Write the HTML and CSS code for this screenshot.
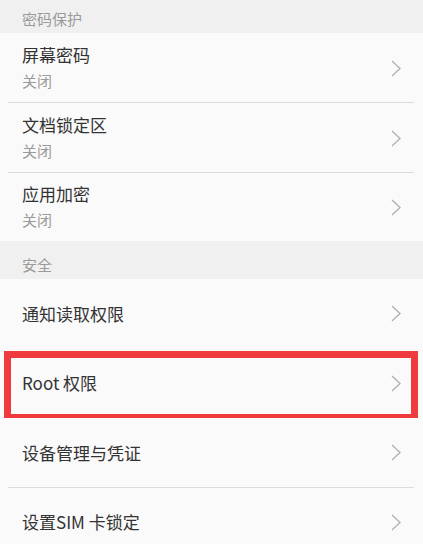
FILE: index.html
```html
<!DOCTYPE html>
<html lang="zh-CN">
<head>
<meta charset="utf-8">
<link rel="stylesheet" href="styles.css">
</head>
<body>
<div class="page">
  <div class="section-header first">密码保护</div>
  <div class="row two-line divided">
    <div class="texts"><div class="title">屏幕密码</div><div class="sub">关闭</div></div>
    <svg class="chev" width="10" height="17" viewBox="0 0 10 17"><polyline points="1,1 9,8.5 1,16" /></svg>
  </div>
  <div class="row two-line divided">
    <div class="texts"><div class="title">文档锁定区</div><div class="sub">关闭</div></div>
    <svg class="chev" width="10" height="17" viewBox="0 0 10 17"><polyline points="1,1 9,8.5 1,16" /></svg>
  </div>
  <div class="row two-line last">
    <div class="texts"><div class="title">应用加密</div><div class="sub">关闭</div></div>
    <svg class="chev" width="10" height="17" viewBox="0 0 10 17"><polyline points="1,1 9,8.5 1,16" /></svg>
  </div>
  <div class="section-header">安全</div>
  <div class="row one-line">
    <div class="title">通知读取权限</div>
    <svg class="chev" width="10" height="17" viewBox="0 0 10 17"><polyline points="1,1 9,8.5 1,16" /></svg>
  </div>
  <div class="row one-line highlighted">
    <div class="title">Root 权限</div>
    <svg class="chev" width="10" height="17" viewBox="0 0 10 17"><polyline points="1,1 9,8.5 1,16" /></svg>
    <div class="mark"></div>
  </div>
  <div class="row one-line divided">
    <div class="title">设备管理与凭证</div>
    <svg class="chev" width="10" height="17" viewBox="0 0 10 17"><polyline points="1,1 9,8.5 1,16" /></svg>
  </div>
  <div class="row one-line">
    <div class="title">设置SIM 卡锁定</div>
    <svg class="chev" width="10" height="17" viewBox="0 0 10 17"><polyline points="1,1 9,8.5 1,16" /></svg>
  </div>
</div>
</body>
</html>
```

FILE: styles.css
```css
html, body {
  margin: 0;
  padding: 0;
  background: #fafafa;
  overflow: hidden;
}
.page {
  width: 423px;
  height: 544px;
  overflow: hidden;
  font-family: "Noto Sans CJK SC", "Noto Sans", Roboto, sans-serif;
}
.section-header {
  height: 38px;
  box-sizing: border-box;
  background: #f0f0f0;
  color: #9a9a9a;
  font-size: 15px;
  line-height: 20px;
  padding: 14px 22px 4px;
}
.section-header.first {
  height: 33px;
  padding-top: 9px;
}
.row {
  position: relative;
  display: flex;
  align-items: center;
  justify-content: space-between;
  box-sizing: border-box;
  padding: 0 22px;
  background: #fafafa;
}
.row.two-line { height: 70px; }
.row.two-line.last { height: 68px; }
.row.one-line { height: 69.5px; }
.row.divided::after {
  content: "";
  position: absolute;
  left: 8px;
  right: 9px;
  bottom: 0;
  height: 1px;
  background: #dcdcdc;
}
.texts {
  display: flex;
  flex-direction: column;
  padding-bottom: 1px;
}
.title {
  color: #333333;
  font-size: 17px;
  line-height: 24px;
}
.two-line .title { margin-top: -1px; }
.sub {
  color: #9a9a9a;
  font-size: 15px;
  line-height: 20px;
  margin-top: 4px;
}
.chev {
  flex: none;
}
.chev polyline {
  fill: none;
  stroke: #b0b0b0;
  stroke-width: 1.3;
}
.mark {
  position: absolute;
  left: 4px;
  right: 5px;
  top: 2px;
  bottom: -3px;
  border: 7px solid #ef3a3f;
  box-sizing: border-box;
  pointer-events: none;
}
```
